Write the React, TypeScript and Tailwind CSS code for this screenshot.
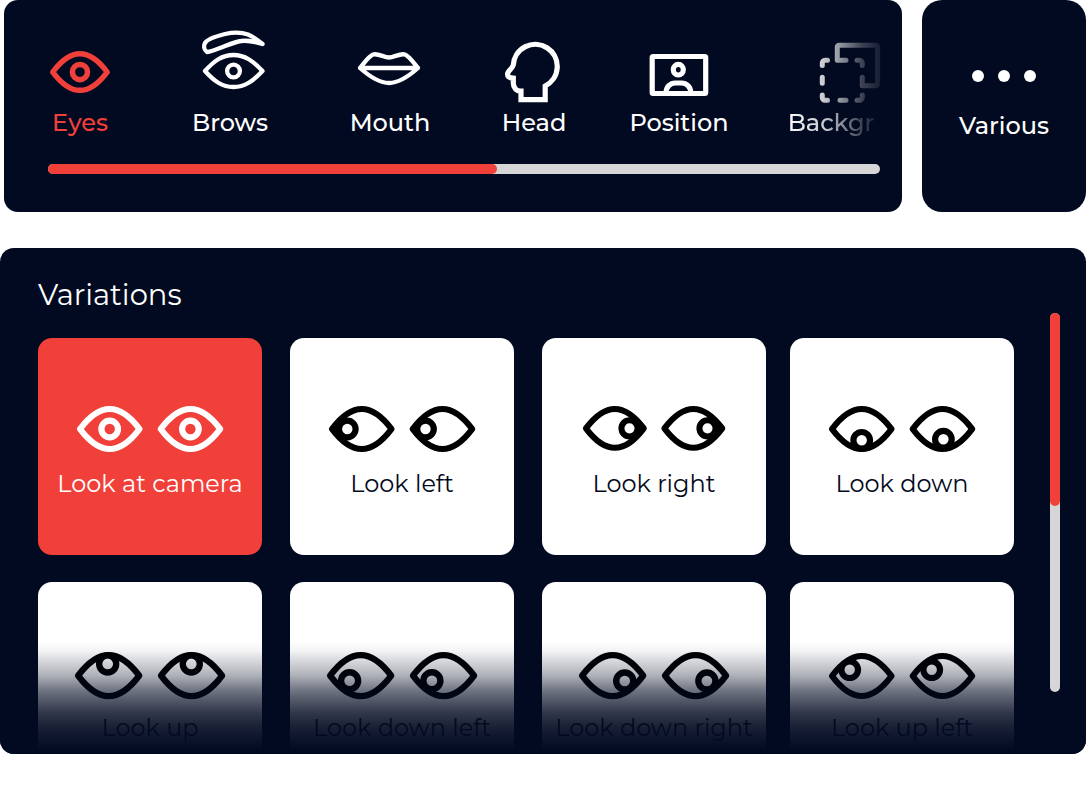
import type { ReactNode } from "react";

const EYE_OUTLINE =
  "M3 23C12 11 21 3 32.750 3S53.500 11 62.500 23C53.500 35 44.500 43 32.750 43S12 35 3 23Z";

function EyesIcon() {
  return (
    <g transform="translate(10 23) scale(.915)" strokeWidth="6">
      <path d={EYE_OUTLINE} />
      <circle cx="32.750" cy="23" r="8.3" />
    </g>
  );
}

function BrowsIcon() {
  return (
    <g strokeWidth="4.300">
      <path d="M17 24C14 22 13.5 18 15 15C17 11 27 8 35 6C44 4 51 4 58 6.5C64 9 69 13 72.5 16C66 14 58 12 51 13C46 13.5 38 17 30 20C25 22 21 23.5 17 24Z" />
      <path d="M15 43C24 33 32 27 43.5 27S63 33 72.500 43C63 53 55 59 43.500 59S24 53 15 43Z" />
      <circle cx="43.500" cy="43" r="6.400" />
    </g>
  );
}

function MouthIcon() {
  return (
    <path
      strokeWidth="4.300"
      d="M10 40C15 34 19 28 23 26.500C28 25 34 29.500 39 29.500S50 25 55 26.500C59 28 63 34 68 40C59 48 49 55 39 55S19 48 10 40ZM10 40H68"
    />
  );
}

function HeadIcon() {
  return (
    <path
      strokeWidth="5.200"
      strokeLinejoin="miter"
      d="M51.200 71.700V58A22 22 0 1 0 19.300 37C18.500 40.500 15 42 13.800 45C13 48 14.500 50 19.300 50.200V55C19.300 60 22.500 63.300 27 63.200V71.700Z"
    />
  );
}

function PositionIcon() {
  return (
    <g strokeWidth="5.200">
      <rect x="13.200" y="28.500" width="53.500" height="37" rx="1" />
      <ellipse cx="39.300" cy="41.700" rx="5" ry="5.300" />
      <path d="M27.200 65v-1a9 9 0 0 1 9-9h6.400a9 9 0 0 1 9 9v1" />
    </g>
  );
}

function BackgroundIcon() {
  return (
    <g strokeWidth="5">
      <path d="M55 32.300H46.300V19a1.700 1.700 0 0 1 1.700-1.700H85a1.700 1.700 0 0 1 1.700 1.700V56a1.700 1.700 0 0 1-1.700 1.700H71.300V49.300" />
      <path d="M31.300 37.500V35a2.700 2.700 0 0 1 2.700-2.700h2.500M66 32.300h2.600a2.700 2.700 0 0 1 2.700 2.700v2.500M31.300 49.300v6M31.300 67v2.600a2.700 2.700 0 0 0 2.700 2.700h2.500M49 72.300h6M66 72.300h2.600a2.700 2.700 0 0 0 2.700-2.700V67" />
    </g>
  );
}

function DotsIcon() {
  return (
    <g fill="currentColor" stroke="none">
      <circle cx="14" cy="48" r="6" />
      <circle cx="40" cy="48" r="6" />
      <circle cx="66" cy="48" r="6" />
    </g>
  );
}

function TabIcon({ children }: { children: ReactNode }) {
  return (
    <svg
      viewBox="0 0 80 76"
      className="h-19 w-20 overflow-visible"
      fill="none"
      stroke="currentColor"
      strokeLinecap="round"
      strokeLinejoin="round"
      aria-hidden="true"
    >
      {children}
    </svg>
  );
}

const tabs = [
  { label: "Eyes", icon: <EyesIcon />, active: true },
  { label: "Brows", icon: <BrowsIcon /> },
  { label: "Mouth", icon: <MouthIcon /> },
  { label: "Head", icon: <HeadIcon /> },
  { label: "Position", icon: <PositionIcon /> },
  { label: "Backgr", icon: <BackgroundIcon />, faded: true },
];

type Variation = {
  label: string;
  size: string;
  pupils: [number, number, number, number];
  active?: boolean;
  low?: boolean;
};

const variations: Variation[] = [
  { label: "Look at camera", size: "w-[146px]", pupils: [32.7, 23, 32.7, 23], active: true },
  { label: "Look left", size: "w-[146px]", pupils: [18.3, 23, 15.8, 23] },
  { label: "Look right", size: "w-[142px]", pupils: [47.8, 23, 47.3, 23] },
  { label: "Look down", size: "w-[146px]", pupils: [32.7, 34.3, 33.7, 33.2] },
  { label: "Look up", size: "w-[150px]", pupils: [31.8, 11.6, 32.5, 11.6], low: true },
  { label: "Look down left", size: "w-[150px]", pupils: [22, 28, 21.4, 28], low: true },
  { label: "Look down right", size: "w-[150px]", pupils: [44.5, 28.2, 43.8, 28.2], low: true },
  { label: "Look up left", size: "w-[146px]", pupils: [20.7, 16.7, 22, 16.7], low: true },
];

function VariationCard({ label, size, pupils, active, low }: Variation) {
  return (
    <button
      type="button"
      aria-pressed={!!active}
      className={`flex h-[217px] w-56 flex-col items-center rounded-[14px] pt-16 ${
        active ? "bg-[#f13f3a] text-white" : "bg-white text-black"
      }`}
    >
      <span className={`flex h-[53px] ${low ? "items-end" : "items-center"}`}>
        <svg
          viewBox="0 0 146 46"
          className={`${size} overflow-visible`}
          fill="none"
          stroke="currentColor"
          strokeWidth="6.2"
          strokeLinejoin="round"
          aria-hidden="true"
        >
          <path d={EYE_OUTLINE} />
          <circle cx={pupils[0]} cy={pupils[1]} r="8.3" />
          <g transform="translate(80.700 0)">
            <path d={EYE_OUTLINE} />
            <circle cx={pupils[2]} cy={pupils[3]} r="8.3" />
          </g>
        </svg>
      </span>
      <span
        className={`mt-[13px] text-2xl leading-8 whitespace-nowrap ${
          active ? "text-white" : "text-[#020a21]"
        }`}
      >
        {label}
      </span>
    </button>
  );
}

export default function App() {
  return (
    <main className="flex flex-col gap-9 bg-white font-['Montserrat','Inter',sans-serif] text-white">
      <div className="flex gap-5 pl-1">
        <nav
          aria-label="Features"
          className="min-w-0 flex-1 overflow-hidden rounded-[14px] bg-[#020a21] pt-7 pb-[38px]"
        >
          <div className="grid grid-cols-[140fr_160fr_160fr_128fr_162fr_142fr] pl-1.5">
            {tabs.map((tab) => (
              <button
                key={tab.label}
                type="button"
                aria-current={tab.active ? "true" : undefined}
                className={`flex flex-col items-center ${tab.active ? "text-[#f13f3a]" : "text-white"} ${
                  tab.faded
                    ? "[mask-image:linear-gradient(to_right,#000_18%,rgb(0_0_0/.8)_44%,rgb(0_0_0/.6)_55%,rgb(0_0_0/.23)_72%,rgb(0_0_0/.08)_85%,transparent_92%)]"
                    : ""
                }`}
              >
                <TabIcon>{tab.icon}</TabIcon>
                <span className="mt-[3px] text-2xl leading-8 font-medium">{tab.label}</span>
              </button>
            ))}
          </div>
          <div
            role="scrollbar"
            aria-label="Scroll features"
            aria-orientation="horizontal"
            aria-valuenow={0}
            className="mt-[25px] mr-[22px] ml-11 h-2.5 rounded-full bg-[#d6d6d6]"
          >
            <div className="h-full w-[54%] rounded-full bg-[#f13f3a]" />
          </div>
        </nav>
        <button
          type="button"
          className="flex w-41 flex-col items-center rounded-[20px] bg-[#020a21] pt-7"
        >
          <TabIcon>
            <DotsIcon />
          </TabIcon>
          <span className="mt-1.5 text-2xl leading-8 font-medium">Various</span>
        </button>
      </div>

      <section
        aria-labelledby="variations-title"
        className="relative flex h-[506px] gap-9 overflow-hidden rounded-[14px] bg-[#020a21] pr-[26px] pl-[38px]"
      >
        <div className="min-w-0 flex-1 pt-[27px]">
          <h2 id="variations-title" className="text-[29px] leading-10">
            Variations
          </h2>
          <div className="mt-[23px] grid grid-cols-[252fr_252fr_248fr_224fr] gap-y-[27px]">
            {variations.map((variation) => (
              <VariationCard key={variation.label} {...variation} />
            ))}
          </div>
        </div>
        <div className="pointer-events-none absolute inset-x-0 bottom-0 h-28 bg-[linear-gradient(to_bottom,rgb(2_10_33/0)_0%,rgb(2_10_33/.05)_8%,rgb(2_10_33/.32)_30%,rgb(2_10_33/.56)_43%,rgb(2_10_33/.68)_52%,rgb(2_10_33/.81)_63%,rgb(2_10_33/.91)_76%,rgb(2_10_33)_96%)]" />
        <div
          role="scrollbar"
          aria-label="Scroll variations"
          aria-orientation="vertical"
          aria-valuenow={0}
          className="relative mt-[65px] mb-[62px] w-2.5 rounded-full bg-[#d6d6d6]"
        >
          <div className="h-[51%] w-full rounded-full bg-[#f13f3a]" />
        </div>
      </section>
    </main>
  );
}
